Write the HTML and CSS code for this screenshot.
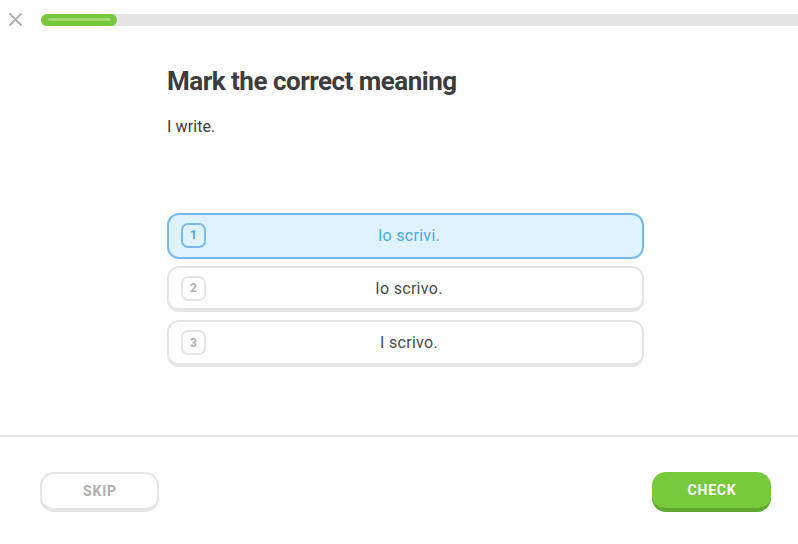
FILE: index.html
```html
<!DOCTYPE html>
<html lang="en">
<head>
<meta charset="utf-8">
<title>Mark the correct meaning</title>
<link rel="stylesheet" href="styles.css">
</head>
<body>
<div class="page">
  <header class="topbar">
    <button class="close" aria-label="Close">
      <svg width="13" height="13" viewBox="0 0 13 13"><path d="M1 1L12 12M12 1L1 12" stroke="#afafaf" stroke-width="1.8" stroke-linecap="round" fill="none"/></svg>
    </button>
    <div class="progress">
      <div class="progress-fill" style="width:76px"><span class="shine"></span></div>
    </div>
  </header>
  <main class="lesson">
    <h1 class="title">Mark the correct meaning</h1>
    <p class="prompt">I write.</p>
    <div class="choices">
      <div class="choice selected"><span class="num">1</span><span class="label">Io scrivi.</span></div>
      <div class="choice"><span class="num">2</span><span class="label">Io scrivo.</span></div>
      <div class="choice"><span class="num">3</span><span class="label">I scrivo.</span></div>
    </div>
  </main>
  <footer class="footer">
    <button class="btn skip">SKIP</button>
    <button class="btn check">CHECK</button>
  </footer>
</div>
</body>
</html>
```
FILE: styles.css
```css
* { box-sizing: border-box; }
html, body { margin: 0; padding: 0; background: #fff; }
body { font-family: Roboto, "Noto Sans", sans-serif; color: #3c3c3c; }
.page { width: 798px; height: 544px; display: flex; flex-direction: column; overflow: hidden; }
.topbar { height: 40px; display: flex; align-items: flex-start; padding: 13px 0 0 9px; }
.close { width: 13px; height: 13px; padding: 0; border: 0; background: none; display: block; }
.close svg { display: block; }
.progress { flex: 1; margin-left: 19px; margin-top: 1px; height: 12px; background: #e5e5e5; border-radius: 6px 0 0 6px; }
.progress-fill { height: 12px; background: #78c83c; border-radius: 6px; position: relative; }
.shine { position: absolute; left: 7px; right: 6px; top: 4px; height: 3px; border-radius: 2px; background: rgba(255,255,255,0.3); }
.lesson { flex: 1; padding-left: 167px; }
.title { margin: 25px 0 0; font-size: 26px; line-height: 32px; font-weight: 700; letter-spacing: -0.5px; color: #3c3c3c; }
.prompt { margin: 20px 0 0; font-size: 16px; line-height: 20px; letter-spacing: 0.1px; color: #3c3c3c; }
.choices { margin-top: 76px; width: 477px; display: flex; flex-direction: column; gap: 7px; }
.choice { height: 46px; display: flex; align-items: center; padding: 0 14px 0 12px; border: 2px solid #e5e5e5; border-bottom-width: 4px; border-radius: 12px; background: #fff; }
.choice:last-child { margin-top: 1px; height: 47px; }
.num { width: 25px; height: 25px; border: 2px solid #e5e5e5; border-radius: 7px; display: flex; align-items: center; justify-content: center; font-size: 12px; font-weight: 700; color: #afafaf; }
.label { flex: 1; text-align: center; margin-right: 16px; font-size: 16px; letter-spacing: 0.3px; color: #4b4b4b; }
.choice.selected { border-color: #7ab9ee; border-bottom-width: 2px; background: #e0f2fe; padding-bottom: 2px; }
.choice.selected .num { border-color: #7ab9ee; color: #4ea6e6; }
.choice.selected .label { color: #4ea6e6; }
.footer { height: 109px; border-top: 2px solid #e5e5e5; display: flex; justify-content: space-between; align-items: flex-start; padding: 35px 27px 0 40px; }
.btn { width: 119px; height: 40px; border-radius: 14px; font-family: Roboto, "Noto Sans", sans-serif; font-size: 14px; font-weight: 700; letter-spacing: 0.8px; padding: 0 0 0 1px; }
.skip { background: #fff; border: 2px solid #e5e5e5; border-bottom-width: 4px; color: #afafaf; }
.check { background: #78c83c; border: 0; border-bottom: 4px solid #5ea830; color: #fff; }
```
